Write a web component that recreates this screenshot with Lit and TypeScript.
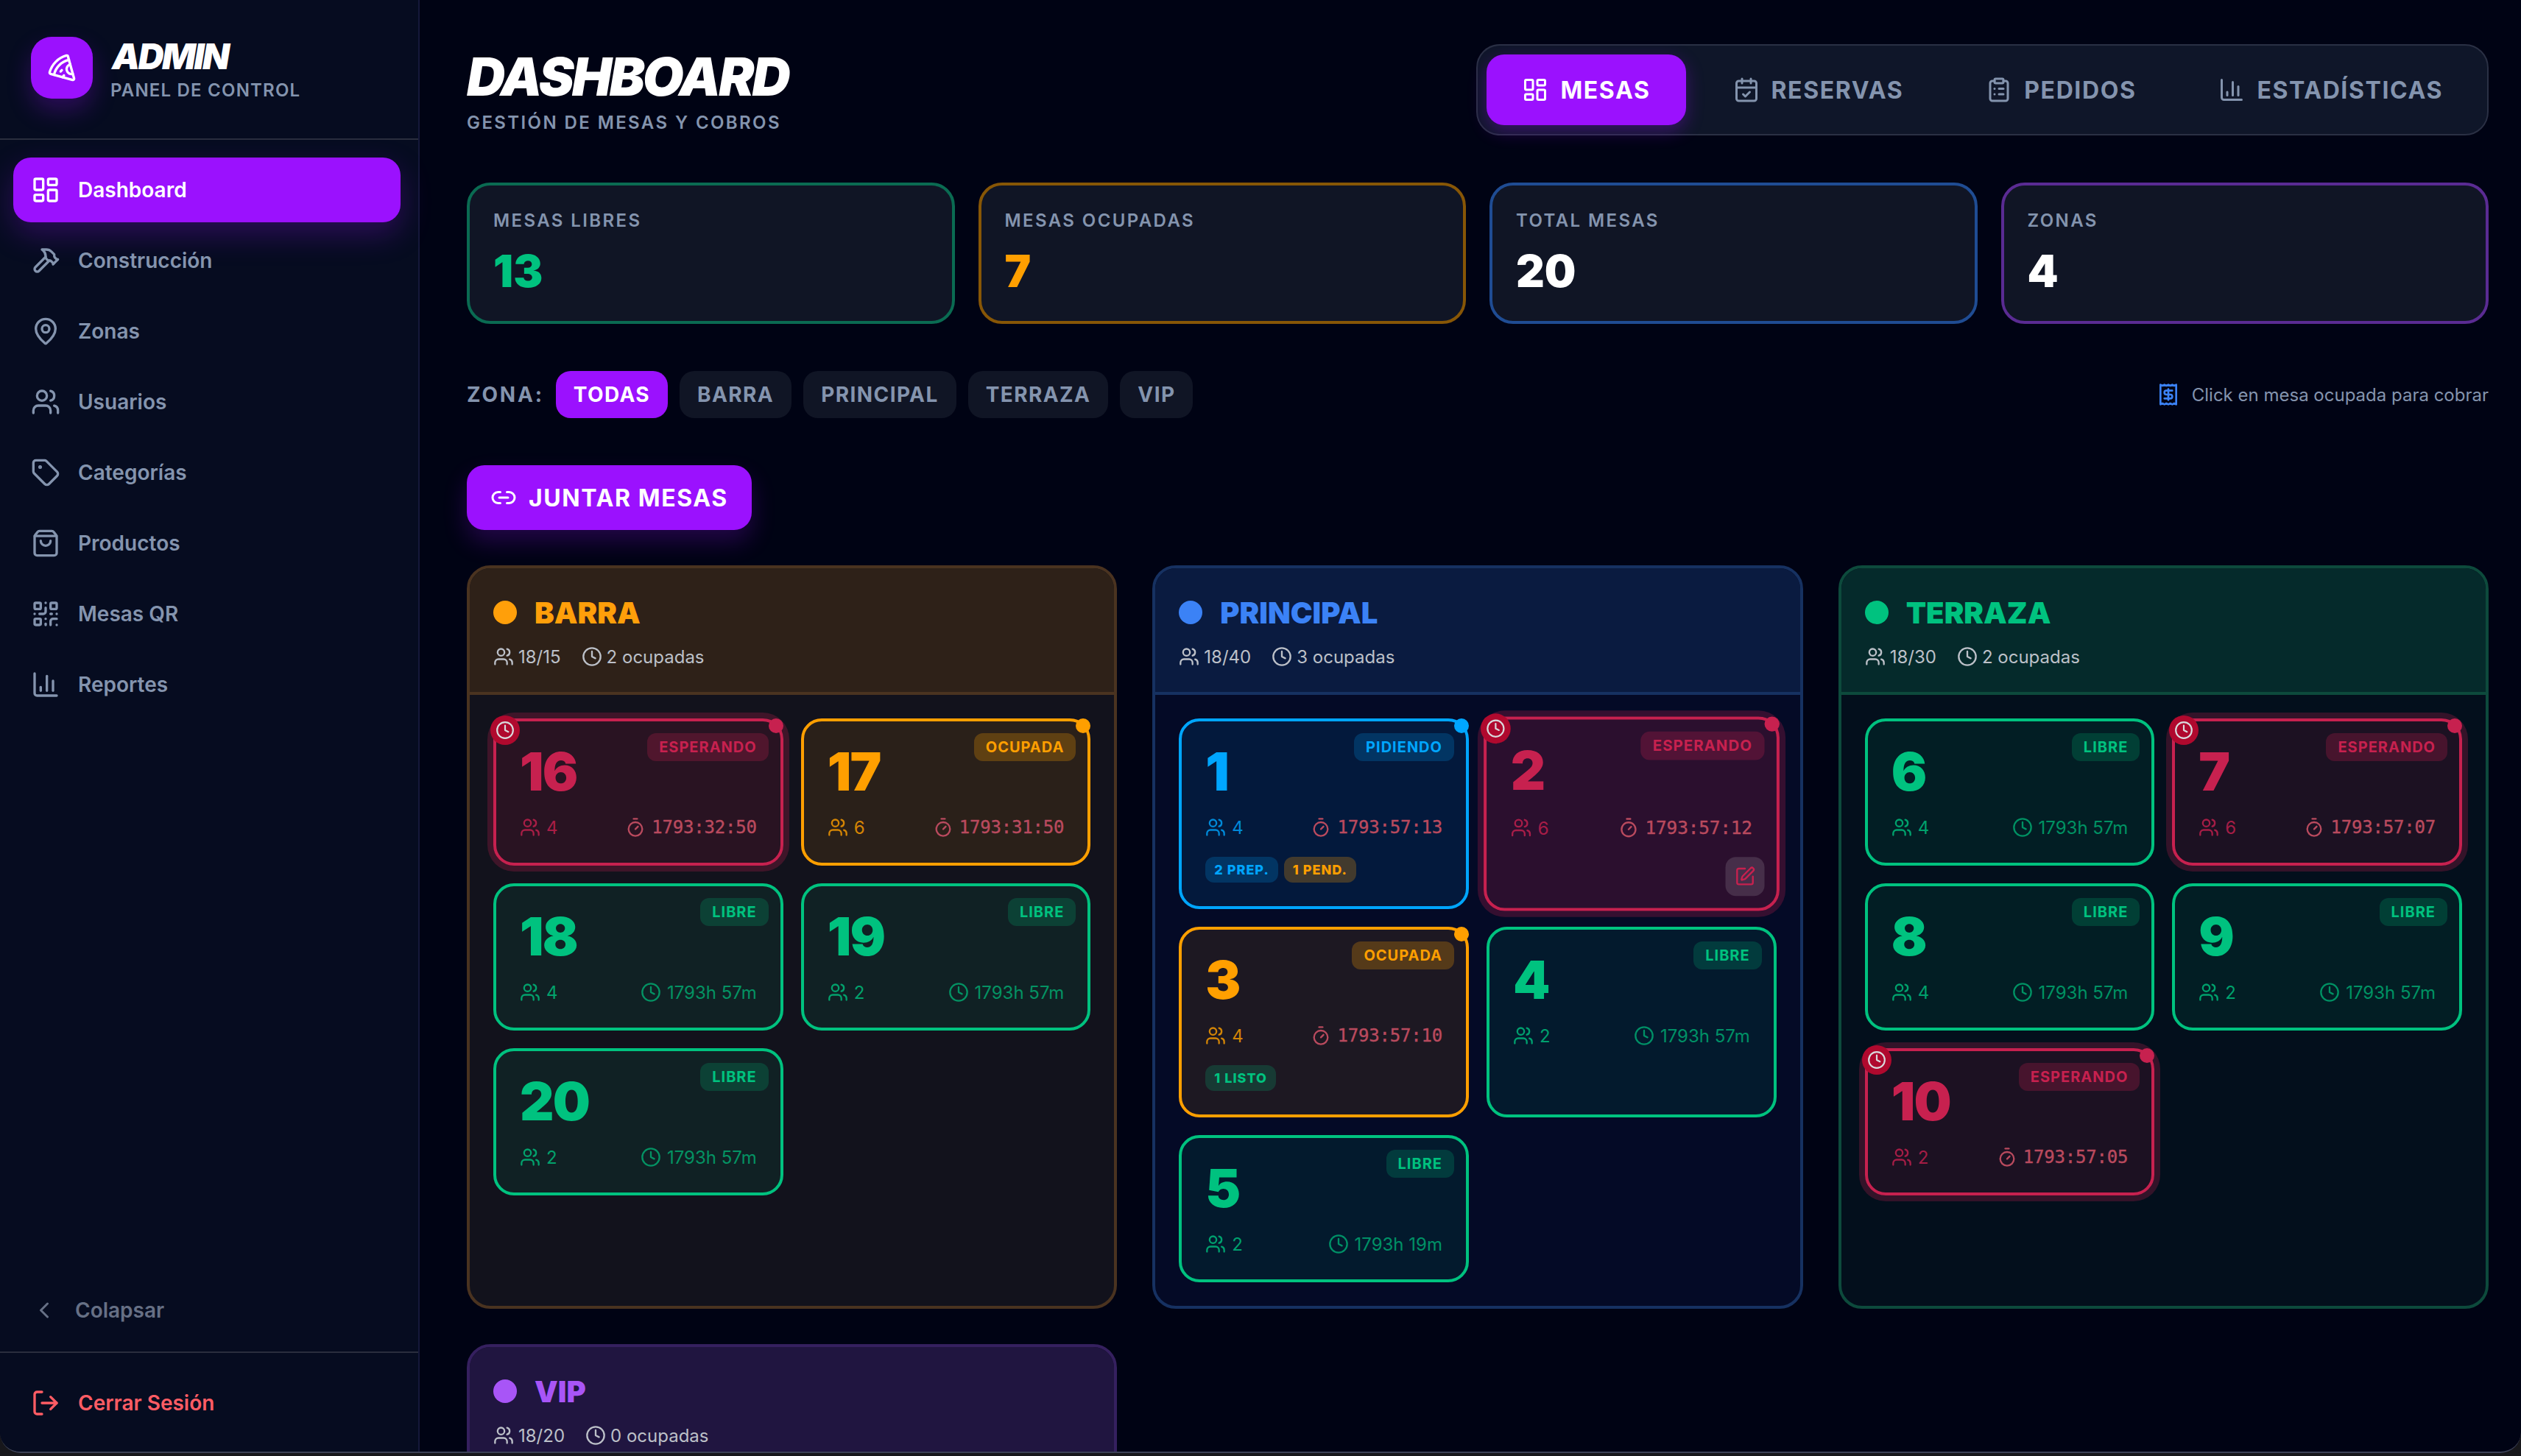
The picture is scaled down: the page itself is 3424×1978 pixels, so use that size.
import { LitElement, html, css, svg } from "lit";
import { customElement } from "lit/decorators.js";

const P = {
  dash: svg`<rect width="7" height="9" x="3" y="3" rx="1"/><rect width="7" height="5" x="14" y="3" rx="1"/><rect width="7" height="9" x="14" y="12" rx="1"/><rect width="7" height="5" x="3" y="16" rx="1"/>`,
  hammer: svg`<path d="m15 12-8.373 8.373a1 1 0 1 1-3-3L12 9"/><path d="m18 15 4-4"/><path d="m21.5 11.5-1.914-1.914A2 2 0 0 1 19 8.172V7l-2.26-2.26a6 6 0 0 0-4.202-1.756L9 2.96l.92.82A6.18 6.18 0 0 1 12 8.4V10l2 2h1.172a2 2 0 0 1 1.414.586L18.5 14.5"/>`,
  pin: svg`<path d="M20 10c0 4.993-5.539 10.193-7.399 11.799a1 1 0 0 1-1.202 0C9.539 20.193 4 14.993 4 10a8 8 0 0 1 16 0"/><circle cx="12" cy="10" r="3"/>`,
  users: svg`<path d="M16 21v-2a4 4 0 0 0-4-4H6a4 4 0 0 0-4 4v2"/><circle cx="9" cy="7" r="4"/><path d="M22 21v-2a4 4 0 0 0-3-3.87"/><path d="M16 3.13a4 4 0 0 1 0 7.75"/>`,
  tag: svg`<path d="M12.586 2.586A2 2 0 0 0 11.172 2H4a2 2 0 0 0-2 2v7.172a2 2 0 0 0 .586 1.414l8.704 8.704a2.426 2.426 0 0 0 3.42 0l6.58-6.58a2.426 2.426 0 0 0 0-3.42z"/><circle cx="7.5" cy="7.5" r=".5" fill="currentColor"/>`,
  bag: svg`<path d="M16 10a4 4 0 0 1-8 0"/><path d="M3.103 6.034h17.794"/><path d="M3.4 5.467a2 2 0 0 0-.4 1.2V20a2 2 0 0 0 2 2h14a2 2 0 0 0 2-2V6.667a2 2 0 0 0-.4-1.2l-2-2.667A2 2 0 0 0 17 2H7a2 2 0 0 0-1.6.8z"/>`,
  qr: svg`<rect width="5" height="5" x="3" y="3" rx="1"/><rect width="5" height="5" x="16" y="3" rx="1"/><rect width="5" height="5" x="3" y="16" rx="1"/><path d="M21 16h-3a2 2 0 0 0-2 2v3"/><path d="M21 21v.01"/><path d="M12 7v3a2 2 0 0 1-2 2H7"/><path d="M3 12h.01"/><path d="M12 3h.01"/><path d="M12 16v.01"/><path d="M16 12h1"/><path d="M21 12v.01"/><path d="M12 21v-1"/>`,
  chart: svg`<path d="M3 3v16a2 2 0 0 0 2 2h16"/><path d="M18 17V9"/><path d="M13 17V5"/><path d="M8 17v-3"/>`,
  chevron: svg`<path d="m15 18-6-6 6-6"/>`,
  logout: svg`<path d="m16 17 5-5-5-5"/><path d="M21 12H9"/><path d="M9 21H5a2 2 0 0 1-2-2V5a2 2 0 0 1 2-2h4"/>`,
  pizza: svg`<path d="m12 14-1 1"/><path d="m13.75 18.25-1.25 1.42"/><path d="M17.775 5.654a15.68 15.68 0 0 0-12.121 12.12"/><path d="M18.8 9.3a1 1 0 0 0 2.1 7.7"/><path d="M21.964 20.732a1 1 0 0 1-1.232 1.232l-18-5a1 1 0 0 1-.695-1.232A19.68 19.68 0 0 1 15.732 2.037a1 1 0 0 1 1.232.695z"/>`,
  calendar: svg`<path d="M8 2v4"/><path d="M16 2v4"/><rect width="18" height="18" x="3" y="4" rx="2"/><path d="M3 10h18"/><path d="m9 16 2 2 4-4"/>`,
  clip: svg`<rect width="8" height="4" x="8" y="2" rx="1"/><path d="M16 4h2a2 2 0 0 1 2 2v14a2 2 0 0 1-2 2H6a2 2 0 0 1-2-2V6a2 2 0 0 1 2-2h2"/><path d="M12 11h4"/><path d="M12 16h4"/><path d="M8 11h.01"/><path d="M8 16h.01"/>`,
  receipt: svg`<path d="M4 2v20l2-1 2 1 2-1 2 1 2-1 2 1 2-1 2 1V2l-2 1-2-1-2 1-2-1-2 1-2-1-2 1Z"/><path d="M16 8h-6a2 2 0 1 0 0 4h4a2 2 0 1 1 0 4H8"/><path d="M12 17.5v-11"/>`,
  link: svg`<path d="M9 17H7A5 5 0 0 1 7 7h2"/><path d="M15 7h2a5 5 0 1 1 0 10h-2"/><line x1="8" x2="16" y1="12" y2="12"/>`,
  clock: svg`<circle cx="12" cy="12" r="10"/><polyline points="12 6 12 12 16 14"/>`,
  timer: svg`<line x1="10" x2="14" y1="2" y2="2"/><line x1="12" x2="15" y1="14" y2="11"/><circle cx="12" cy="14" r="8"/>`,
  pen: svg`<path d="M12 3H5a2 2 0 0 0-2 2v14a2 2 0 0 0 2 2h14a2 2 0 0 0 2-2v-7"/><path d="M18.375 2.625a1 1 0 0 1 3 3l-9.013 9.014a2 2 0 0 1-.853.505l-2.873.84a.5.5 0 0 1-.62-.62l.84-2.873a2 2 0 0 1 .506-.852z"/>`,
};
type IconName = keyof typeof P;
const ic = (n: IconName, cls = "i40") =>
  html`<svg class="ic ${cls}" viewBox="0 0 24 24" fill="none" stroke="currentColor" stroke-width="2" stroke-linecap="round" stroke-linejoin="round">${P[n]}</svg>`;

type St = "free" | "busy" | "order" | "wait";
interface Mesa { n: number; s: St; p: number; t: string; tags?: [string, string][]; hover?: boolean; }
const LABEL: Record<St, string> = { free: "LIBRE", busy: "OCUPADA", order: "PIDIENDO", wait: "ESPERANDO" };

const ZONES: { name: string; cls: string; cap: string; occ: string; mesas: Mesa[] }[] = [
  { name: "BARRA", cls: "z-barra", cap: "18/15", occ: "2 ocupadas", mesas: [
    { n: 16, s: "wait", p: 4, t: "1793:32:50" },
    { n: 17, s: "busy", p: 6, t: "1793:31:50" },
    { n: 18, s: "free", p: 4, t: "1793h 57m" },
    { n: 19, s: "free", p: 2, t: "1793h 57m" },
    { n: 20, s: "free", p: 2, t: "1793h 57m" },
  ] },
  { name: "PRINCIPAL", cls: "z-principal", cap: "18/40", occ: "3 ocupadas", mesas: [
    { n: 1, s: "order", p: 4, t: "1793:57:13", tags: [["2 PREP.", "t-blue"], ["1 PEND.", "t-orange"]] },
    { n: 2, s: "wait", p: 6, t: "1793:57:12", hover: true },
    { n: 3, s: "busy", p: 4, t: "1793:57:10", tags: [["1 LISTO", "t-green"]] },
    { n: 4, s: "free", p: 2, t: "1793h 57m" },
    { n: 5, s: "free", p: 2, t: "1793h 19m" },
  ] },
  { name: "TERRAZA", cls: "z-terraza", cap: "18/30", occ: "2 ocupadas", mesas: [
    { n: 6, s: "free", p: 4, t: "1793h 57m" },
    { n: 7, s: "wait", p: 6, t: "1793:57:07" },
    { n: 8, s: "free", p: 4, t: "1793h 57m" },
    { n: 9, s: "free", p: 2, t: "1793h 57m" },
    { n: 10, s: "wait", p: 2, t: "1793:57:05" },
  ] },
  { name: "VIP", cls: "z-vip", cap: "18/20", occ: "0 ocupadas", mesas: [] },
];

const NAV: [IconName, string][] = [
  ["dash", "Dashboard"], ["hammer", "Construcción"], ["pin", "Zonas"], ["users", "Usuarios"],
  ["tag", "Categorías"], ["bag", "Productos"], ["qr", "Mesas QR"], ["chart", "Reportes"],
];
const TABS: [IconName, string][] = [["dash", "MESAS"], ["calendar", "RESERVAS"], ["clip", "PEDIDOS"], ["chart", "ESTADÍSTICAS"]];
const STATS: [string, string, string][] = [
  ["MESAS LIBRES", "13", "s-green"], ["MESAS OCUPADAS", "7", "s-orange"], ["TOTAL MESAS", "20", "s-blue"], ["ZONAS", "4", "s-purple"],
];

@customElement("app-root")
export class AppRoot extends LitElement {
  static styles = css`
    :host { display: block; height: 1978px; background: #17171b; font-family: Inter, "Noto Sans", sans-serif; color: #fff; overflow: hidden; }
    * { box-sizing: border-box; }
    .ic { display: block; flex: none; }
    .i40 { width: 40px; height: 40px; }
    .i36 { width: 36px; height: 36px; }
    .i32 { width: 32px; height: 32px; }
    .i28 { width: 28px; height: 28px; }
    .i26 { width: 26px; height: 26px; }
    .window { height: 1974px; display: flex; overflow: hidden; background: #000314; border-bottom: 2px solid #3c4156; border-radius: 0 0 28px 28px; }

    .side { width: 570px; flex: none; background: #060c20; border-right: 2px solid #15183a; display: flex; flex-direction: column; }
    .brand { height: 190px; flex: none; padding: 50px 42px 0; display: flex; gap: 26px; border-bottom: 2px solid #2a2e3e; }
    .logo { width: 84px; height: 84px; border-radius: 28px; background: #9b11fe; display: flex; align-items: center; justify-content: center; box-shadow: 0 16px 32px rgba(155,17,254,.25); }
    .brand-t { font-size: 48px; line-height: 56px; font-weight: 900; font-style: italic; letter-spacing: -2.4px; margin-top: -1px; }
    .brand-s { font-size: 24px; line-height: 32px; font-weight: 600; letter-spacing: 1.2px; color: #8494ae; margin-top: 2px; margin-left: -2px; }
    nav { flex: 1; padding: 24px 24px 24px 18px; display: flex; flex-direction: column; gap: 8px; }
    .nav-i { height: 88px; padding: 0 24px; border-radius: 24px; display: flex; align-items: center; gap: 24px; font-size: 28px; font-weight: 600; color: #8494ae; }
    .nav-i.on { background: #9b11fe; color: #fff; box-shadow: 0 16px 40px rgba(155,17,254,.25); }
    .collapse { height: 88px; flex: none; padding: 0 0 0 42px; margin-bottom: 12px; display: flex; align-items: center; gap: 24px; font-size: 28px; font-weight: 600; color: #667085; }
    .foot { height: 136px; flex: none; border-top: 2px solid #2a2e3e; padding: 2px 42px 0; display: flex; align-items: center; gap: 24px; font-size: 28px; font-weight: 600; color: #ff5c64; }

    main { flex: 1; min-width: 0; padding: 60px 44px 0 64px; overflow: hidden; }
    header { height: 124px; display: flex; justify-content: space-between; margin-bottom: 64px; }
    h1 { margin: 4px 0 0; font-size: 72px; line-height: 80px; font-weight: 900; font-style: italic; letter-spacing: -3px; }
    .sub { font-size: 24px; line-height: 32px; font-weight: 600; letter-spacing: 2.4px; color: #8494ae; margin-top: 7px; }
    .tabs { display: flex; gap: 16px; padding: 12px; background: #0f1629; border: 2px solid #2a3044; border-radius: 32px; }
    .tab { height: 96px; padding: 0 48px; border-radius: 24px; display: flex; align-items: center; gap: 16px; font-size: 32px; font-weight: 700; letter-spacing: 1.6px; color: #8494ae; }
    .tab.on { background: #9b11fe; color: #fff; box-shadow: 0 8px 24px rgba(155,17,254,.3); }

    .stats { display: grid; grid-template-columns: repeat(4, 1fr); gap: 32px; margin-bottom: 64px; }
    .stat { height: 192px; padding: 32px; background: #101525; border: 4px solid; border-radius: 32px; }
    .stat-l { font-size: 24px; line-height: 32px; font-weight: 600; letter-spacing: 2.4px; color: #8494ae; margin-bottom: 16px; }
    .stat-v { font-size: 60px; line-height: 72px; font-weight: 900; }
    .s-green { border-color: #0a6b52; } .s-green .stat-v { color: #00c27f; }
    .s-orange { border-color: #875606; } .s-orange .stat-v { color: #ff9f00; }
    .s-blue { border-color: #1f4c93; }
    .s-purple { border-color: #5a2b93; }

    .filter { height: 64px; display: flex; align-items: center; gap: 16px; margin-bottom: 64px; }
    .filter-l { font-size: 28px; font-weight: 700; letter-spacing: 2.8px; color: #8494ae; }
    .chip { height: 64px; padding: 0 24px; border-radius: 20px; background: #101525; color: #8494ae; font-size: 28px; font-weight: 700; letter-spacing: 1.4px; display: flex; align-items: center; }
    .chip.on { background: #9b11fe; color: #fff; }
    .hint { margin-left: auto; display: flex; align-items: center; gap: 16px; font-size: 24px; color: #8494ae; }
    .hint .ic { color: #3b82f6; }

    .join { width: max-content; height: 88px; padding: 0 32px; border-radius: 24px; background: #9b11fe; display: flex; align-items: center; gap: 16px; font-size: 32px; font-weight: 700; letter-spacing: 1.6px; box-shadow: 0 16px 32px rgba(155,17,254,.22); margin-bottom: 48px; }

    .zones { display: grid; grid-template-columns: repeat(3, 1fr); gap: 48px; }
    .zone { border: 4px solid var(--line); border-radius: 32px; background: var(--body); }
    .z-barra { --c: #ff9f0a; --line: #4a3320; --head: #2e2118; --body: #12121c; }
    .z-principal { --c: #3b82f6; --line: #163161; --head: #0a1b40; --body: #040a26; }
    .z-terraza { --c: #00c27f; --line: #0d4a3c; --head: #052a2b; --body: #030f1c; }
    .z-vip { --c: #a855f7; --line: #35205f; --head: #201540; --body: #120c2a; }
    .z-head { height: 172px; padding: 32px 32px 0; background: var(--head); border-bottom: 4px solid var(--line); border-radius: 28px 28px 0 0; }
    .z-title { height: 56px; display: flex; align-items: center; gap: 24px; font-size: 40px; font-weight: 900; color: var(--c); }
    .z-dot { width: 32px; height: 32px; border-radius: 50%; background: var(--c); }
    .z-meta { height: 32px; margin-top: 16px; display: flex; align-items: center; gap: 28px; font-size: 24px; color: #bcc0c8; }
    .z-meta span { display: flex; align-items: center; gap: 6px; }
    .z-body { padding: 32px; display: grid; grid-template-columns: 1fr 1fr; gap: 24px; align-items: stretch; align-content: start; }

    .card { position: relative; min-height: 200px; padding: 32px; border: 4px solid var(--k); border-radius: 28px; background: var(--bg); }
    .free { --k: #00c27f; --bg: rgba(0,194,127,.09); --badge: rgba(0,194,127,.2); }
    .busy { --k: #ff9f00; --bg: rgba(255,159,0,.1); --badge: rgba(255,159,0,.25); }
    .order { --k: #00a6ff; --bg: rgba(0,166,255,.1); --badge: rgba(0,166,255,.2); }
    .wait { --k: #c7214f; --bg: rgba(199,33,79,.13); --badge: rgba(199,33,79,.25); box-shadow: 0 0 0 8px rgba(199,33,79,.25); }
    .hover { transform: scale(1.02); --bg: rgba(199,33,79,.2); }
    .num { font-size: 72px; line-height: 72px; font-weight: 900; letter-spacing: -1.8px; color: var(--k); margin-bottom: 24px; }
    .badge { position: absolute; top: 16px; right: 16px; height: 38px; padding: 0 16px; border-radius: 12px; background: var(--badge); color: var(--k); font-size: 20px; font-weight: 700; letter-spacing: 1px; display: flex; align-items: center; }
    .row { height: 32px; display: flex; justify-content: space-between; align-items: center; font-size: 24px; }
    .row > span { display: flex; align-items: center; gap: 8px; color: var(--k); }
    .row .people { opacity: .8; }
    .row .free-t { opacity: .7; }
    .row .timer { color: #b94a5e; font-family: "DejaVu Sans Mono", "Liberation Mono", monospace; letter-spacing: -.2px; -webkit-text-stroke: .4px #b94a5e; }
    .timer .ic { -webkit-text-stroke: 0; }
    .tags { margin-top: 24px; display: flex; gap: 8px; }
    .t { height: 35px; padding: 0 12px; border-radius: 12px; display: flex; align-items: center; font-size: 18px; font-weight: 800; letter-spacing: 1px; }
    .t-blue { background: rgba(0,166,255,.2); color: #00a6ff; }
    .t-orange { background: rgba(255,159,0,.25); color: #ff9f00; }
    .t-green { background: rgba(0,194,127,.2); color: #00c27f; }
    .alarm { position: absolute; top: -8px; left: -8px; width: 40px; height: 40px; border-radius: 50%; background: #b0092e; color: #d9d9dc; display: flex; align-items: center; justify-content: center; }
    .pip { position: absolute; top: -4px; right: -4px; width: 20px; height: 20px; border-radius: 50%; background: var(--k); }
    .edit { position: absolute; right: 16px; bottom: 16px; width: 52px; height: 52px; border-radius: 14px; background: rgba(255,255,255,.13); color: var(--k); display: flex; align-items: center; justify-content: center; }
  `;

  private mesa(m: Mesa) {
    const live = m.s !== "free";
    return html`<div class="card ${m.s} ${m.hover ? "hover" : ""}">
      ${m.s === "wait" ? html`<div class="alarm">${ic("clock", "i26")}</div>` : ""}
      ${live ? html`<div class="pip"></div>` : ""}
      <div class="badge">${LABEL[m.s]}</div>
      <div class="num">${m.n}</div>
      <div class="row">
        <span class="people">${ic("users", "i28")}${m.p}</span>
        <span class="${live ? "timer" : "free-t"}">${ic(live ? "timer" : "clock", "i28")}${m.t}</span>
      </div>
      ${m.tags ? html`<div class="tags">${m.tags.map(([t, c]) => html`<div class="t ${c}">${t}</div>`)}</div>` : ""}
      ${m.hover ? html`<div class="edit">${ic("pen", "i28")}</div>` : ""}
    </div>`;
  }

  render() {
    return html`<div class="window">
      <aside class="side">
        <div class="brand">
          <div class="logo">${ic("pizza")}</div>
          <div><div class="brand-t">ADMIN</div><div class="brand-s">PANEL DE CONTROL</div></div>
        </div>
        <nav>${NAV.map(([i, t], k) => html`<div class="nav-i ${k === 0 ? "on" : ""}">${ic(i)}${t}</div>`)}</nav>
        <div class="collapse">${ic("chevron", "i36")}Colapsar</div>
        <div class="foot">${ic("logout")}Cerrar Sesión</div>
      </aside>
      <main>
        <header>
          <div><h1>DASHBOARD</h1><div class="sub">GESTIÓN DE MESAS Y COBROS</div></div>
          <div class="tabs">${TABS.map(([i, t], k) => html`<div class="tab ${k === 0 ? "on" : ""}">${ic(i, "i36")}${t}</div>`)}</div>
        </header>
        <section class="stats">
          ${STATS.map(([l, v, c]) => html`<div class="stat ${c}"><div class="stat-l">${l}</div><div class="stat-v">${v}</div></div>`)}
        </section>
        <div class="filter">
          <div class="filter-l">ZONA:</div>
          ${["TODAS", "BARRA", "PRINCIPAL", "TERRAZA", "VIP"].map((z, k) => html`<div class="chip ${k === 0 ? "on" : ""}">${z}</div>`)}
          <div class="hint">${ic("receipt", "i32")}Click en mesa ocupada para cobrar</div>
        </div>
        <div class="join">${ic("link", "i36")}JUNTAR MESAS</div>
        <section class="zones">
          ${ZONES.map((z) => html`<article class="zone ${z.cls}">
            <div class="z-head">
              <div class="z-title"><div class="z-dot"></div>${z.name}</div>
              <div class="z-meta"><span>${ic("users", "i28")}${z.cap}</span><span>${ic("clock", "i28")}${z.occ}</span></div>
            </div>
            <div class="z-body">${z.mesas.map((m) => this.mesa(m))}</div>
          </article>`)}
        </section>
      </main>
    </div>`;
  }
}
